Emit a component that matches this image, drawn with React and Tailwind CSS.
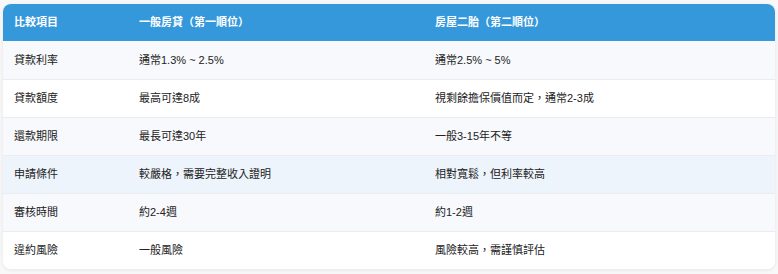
import React from 'react';

const rows = [
  { item: '貸款利率', first: '通常1.3% ~ 2.5%', second: '通常2.5% ~ 5%', bg: 'bg-[#f7f9fc]' },
  { item: '貸款額度', first: '最高可達8成', second: '視剩餘擔保價值而定，通常2-3成', bg: 'bg-white' },
  { item: '還款期限', first: '最長可達30年', second: '一般3-15年不等', bg: 'bg-[#f7f9fc]' },
  { item: '申請條件', first: '較嚴格，需要完整收入證明', second: '相對寬鬆，但利率較高', bg: 'bg-[#eef4fb]' },
  { item: '審核時間', first: '約2-4週', second: '約1-2週', bg: 'bg-[#f7f9fc]' },
  { item: '違約風險', first: '一般風險', second: '風險較高，需謹慎評估', bg: 'bg-white' },
];

const App = () => {
  return (
    <div
      className="w-[778px] h-[274px] bg-[#f8f8f8] pt-[4px] px-[3px]"
      style={{ fontFamily: '"Liberation Sans", "Noto Sans CJK TC", sans-serif' }}
    >
      <div className="rounded-lg overflow-hidden shadow-[0_1px_4px_rgba(0,0,0,0.08)] bg-white">
        <table className="w-full border-collapse table-fixed text-[11px]">
          <colgroup>
            <col className="w-[124px]" />
            <col className="w-[296px]" />
            <col />
          </colgroup>
          <thead>
            <tr className="bg-[#3498db] text-white h-[37px]">
              <th className="text-left font-semibold px-[11px]">比較項目</th>
              <th className="text-left font-semibold px-[12px]">一般房貸（第一順位）</th>
              <th className="text-left font-semibold px-[12px]">房屋二胎（第二順位）</th>
            </tr>
          </thead>
          <tbody>
            {rows.map((row, i) => (
              <tr key={row.item} className={`${row.bg} h-[38px] text-[#222] ${i > 0 ? 'border-t border-[#e9edf1]' : ''}`}>
                <td className="px-[11px]">{row.item}</td>
                <td className="px-[12px]">{row.first}</td>
                <td className="px-[12px]">{row.second}</td>
              </tr>
            ))}
          </tbody>
        </table>
      </div>
    </div>
  );
};

export default App;
